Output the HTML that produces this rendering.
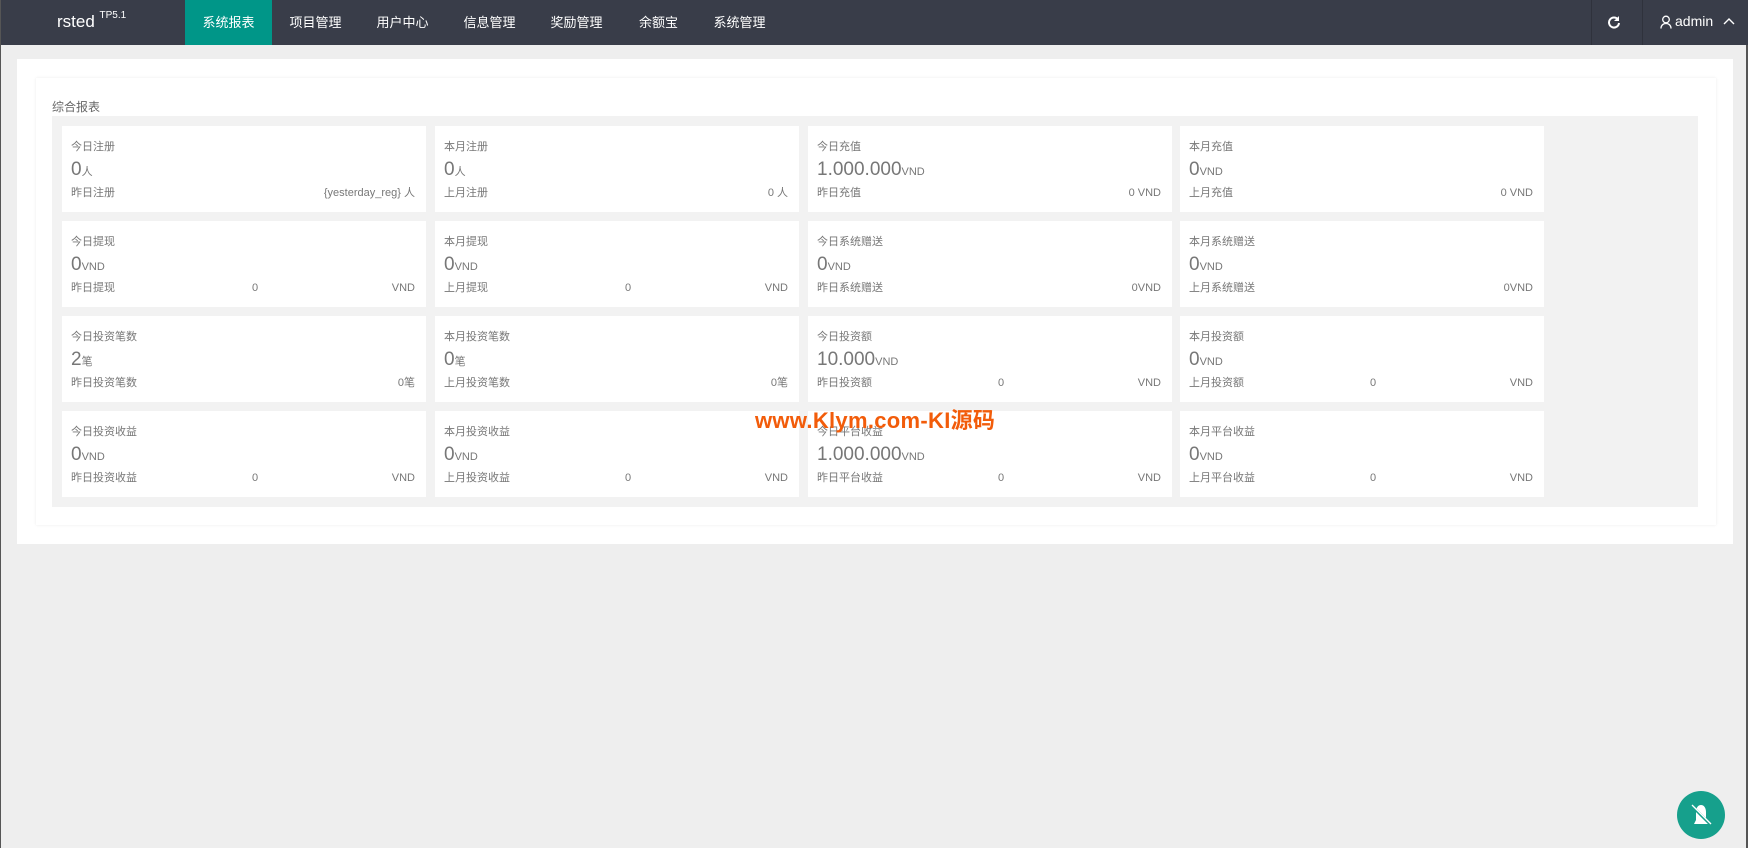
<!DOCTYPE html>
<html><head><meta charset="utf-8"><style>
*{margin:0;padding:0;box-sizing:border-box}
body{width:1748px;height:848px;background:#eeeeee;font-family:"Liberation Sans","Noto Sans CJK SC",sans-serif;position:relative;overflow:hidden;border-left:1px solid #555;border-right:2px solid #555}
.hd{position:absolute;left:0;top:0;width:1748px;height:45px;background:#393d49;color:#fff}
.logo{position:absolute;left:56px;top:12px;font-size:17px;color:#fff}
.logo sup{font-size:10px;vertical-align:top;position:relative;top:-2px}
.nav{position:absolute;top:0;height:45px;line-height:45px;font-size:13px;color:#fff;text-align:center;width:87px}
.nav.on{background:#009688}
.sep{position:absolute;top:0;width:1px;height:45px;background:#2f323c}
.card{position:absolute;left:16px;top:59px;width:1716px;height:485px;background:#fff}
.inner{position:absolute;left:35px;top:78px;width:1680px;height:447px;background:#fff;box-shadow:0 0 3px rgba(0,0,0,.08)}
.ttl{position:absolute;left:51px;top:98px;font-size:12px;color:#666}
.grey{position:absolute;left:51px;top:116px;width:1646px;height:391px;background:#f2f2f2}
.c{position:absolute;width:364px;height:86px;background:#fff;color:#777;font-size:11px;line-height:16px}
.c .l{position:absolute;left:9px;top:13px}
.c .n{position:absolute;left:9px;top:32px;font-size:19px;line-height:24px;color:#777}
.c .n small{font-size:11px}
.c .s,.c .m,.c .r{position:absolute;top:59px;line-height:16px}
.c .s{left:9px}
.c .m{left:190px}
.c .r{right:11px}
.wm{position:absolute;left:754px;top:403px;font-size:22px;font-weight:bold;color:#f25c0a;letter-spacing:0.3px}
.fab{position:absolute;left:1676px;top:791px;width:48px;height:48px;border-radius:50%;background:#16a08c}
</style></head><body>
<div class="hd">
<div class="logo">rsted <sup>TP5.1</sup></div>
<div class="nav on" style="left:184px">系统报表</div>
<div class="nav" style="left:271px">项目管理</div>
<div class="nav" style="left:358px">用户中心</div>
<div class="nav" style="left:445px">信息管理</div>
<div class="nav" style="left:532px">奖励管理</div>
<div class="nav" style="left:614px">余额宝</div>
<div class="nav" style="left:695px">系统管理</div>
<div class="sep" style="left:1590px"></div>
<div class="sep" style="left:1641px"></div>
<svg style="position:absolute;left:1606px;top:15px" width="14" height="14" viewBox="0 0 14 14"><path d="M11 4.5A5 5 0 1 0 12 8" fill="none" stroke="#fff" stroke-width="2"/><path d="M12 1v5H7z" fill="#fff"/></svg>
<svg style="position:absolute;left:1659px;top:15px" width="12" height="14" viewBox="0 0 12 14"><circle cx="6" cy="4.5" r="3.3" fill="none" stroke="#fff" stroke-width="1.3"/><path d="M1 13.5c0-3 2-5 5-5s5 2 5 5" fill="none" stroke="#fff" stroke-width="1.3"/></svg>
<div style="position:absolute;left:1674px;top:13px;font-size:14px">admin</div>
<svg style="position:absolute;left:1722px;top:17px" width="12" height="8" viewBox="0 0 12 8"><path d="M1 7l5-5 5 5" fill="none" stroke="#fff" stroke-width="1.4"/></svg>
</div>
<div class="card"></div>
<div class="inner"></div>
<div class="ttl">综合报表</div>
<div class="grey"></div>

<div class="c" style="left:61px;top:126px"><div class="l">今日注册</div><div class="n">0<small>人</small></div><div class="s">昨日注册</div><div class="r">{yesterday_reg} 人</div></div>
<div class="c" style="left:434px;top:126px"><div class="l">本月注册</div><div class="n">0<small>人</small></div><div class="s">上月注册</div><div class="r">0 人</div></div>
<div class="c" style="left:807px;top:126px"><div class="l">今日充值</div><div class="n">1.000.000<small>VND</small></div><div class="s">昨日充值</div><div class="r">0 VND</div></div>
<div class="c" style="left:1179px;top:126px"><div class="l">本月充值</div><div class="n">0<small>VND</small></div><div class="s">上月充值</div><div class="r">0 VND</div></div>

<div class="c" style="left:61px;top:221px"><div class="l">今日提现</div><div class="n">0<small>VND</small></div><div class="s">昨日提现</div><div class="m">0</div><div class="r">VND</div></div>
<div class="c" style="left:434px;top:221px"><div class="l">本月提现</div><div class="n">0<small>VND</small></div><div class="s">上月提现</div><div class="m">0</div><div class="r">VND</div></div>
<div class="c" style="left:807px;top:221px"><div class="l">今日系统赠送</div><div class="n">0<small>VND</small></div><div class="s">昨日系统赠送</div><div class="r">0VND</div></div>
<div class="c" style="left:1179px;top:221px"><div class="l">本月系统赠送</div><div class="n">0<small>VND</small></div><div class="s">上月系统赠送</div><div class="r">0VND</div></div>

<div class="c" style="left:61px;top:316px"><div class="l">今日投资笔数</div><div class="n">2<small>笔</small></div><div class="s">昨日投资笔数</div><div class="r">0笔</div></div>
<div class="c" style="left:434px;top:316px"><div class="l">本月投资笔数</div><div class="n">0<small>笔</small></div><div class="s">上月投资笔数</div><div class="r">0笔</div></div>
<div class="c" style="left:807px;top:316px"><div class="l">今日投资额</div><div class="n">10.000<small>VND</small></div><div class="s">昨日投资额</div><div class="m">0</div><div class="r">VND</div></div>
<div class="c" style="left:1179px;top:316px"><div class="l">本月投资额</div><div class="n">0<small>VND</small></div><div class="s">上月投资额</div><div class="m">0</div><div class="r">VND</div></div>

<div class="c" style="left:61px;top:411px"><div class="l">今日投资收益</div><div class="n">0<small>VND</small></div><div class="s">昨日投资收益</div><div class="m">0</div><div class="r">VND</div></div>
<div class="c" style="left:434px;top:411px"><div class="l">本月投资收益</div><div class="n">0<small>VND</small></div><div class="s">上月投资收益</div><div class="m">0</div><div class="r">VND</div></div>
<div class="c" style="left:807px;top:411px"><div class="l">今日平台收益</div><div class="n">1.000.000<small>VND</small></div><div class="s">昨日平台收益</div><div class="m">0</div><div class="r">VND</div></div>
<div class="c" style="left:1179px;top:411px"><div class="l">本月平台收益</div><div class="n">0<small>VND</small></div><div class="s">上月平台收益</div><div class="m">0</div><div class="r">VND</div></div>

<div class="wm">www.Klym.com-KI源码</div>
<div class="fab"><svg width="48" height="48" viewBox="0 0 48 48"><path d="M17 33l2-4V21c0-4 2-7 5-7s5 3 5 7v8l2 4z" fill="#fff"/><path d="M15 15l18 18" stroke="#16a08c" stroke-width="3"/><path d="M15 14l19 19" stroke="#fff" stroke-width="1.3"/></svg></div>
</body></html>
